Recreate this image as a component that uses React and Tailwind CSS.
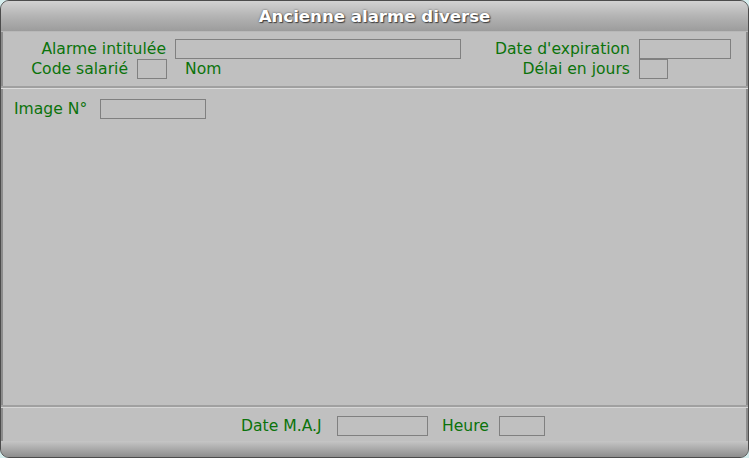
import React from 'react';

const font = { fontFamily: '"DejaVu Sans", Verdana, sans-serif' };

const Field = ({ w, h = 'h-[20px]' }) => (
  <div className={`${w} ${h} border border-[#808080] bg-[#c0c0c0] shrink-0`} />
);

const Label = ({ children, className = '' }) => (
  <span className={`text-[15.6px] leading-[20px] text-[#0b730b] whitespace-nowrap ${className}`}>{children}</span>
);

export default function App() {
  return (
    <div className="w-[749px] h-[458px] bg-[#d6eeee] leading-[20px]" style={font}>
      <div className="w-full h-full flex flex-col rounded-[9px] overflow-hidden border border-[#4c4c4c] bg-[#c0c0c0] shadow-[inset_2px_0_0_#8c8c8c,inset_-2px_0_0_#8c8c8c]">
        {/* Title bar */}
        <div className="h-[31px] shrink-0 flex items-center justify-center pt-[2px] bg-gradient-to-b from-[#d2d2d2] via-[#b4b4b4] to-[#9c9c9c] border-b border-[#b8b8b8]">
          <span className="text-[16.6px] font-bold text-white [text-shadow:1px_1px_1px_#404040,0_0_2px_#505050]">
            Ancienne alarme diverse
          </span>
        </div>

        {/* Header fields */}
        <div className="h-[56px] shrink-0 flex flex-col pt-[7px] pr-[17px] border-b-2 border-[#a0a0a0] shadow-[0_1px_0_#dcdcdc]">
          <div className="flex items-center h-[20px]">
            <div className="w-[165px] text-right"><Label>Alarme intitulée</Label></div>
            <div className="w-[9px]" />
            <Field w="w-[286px]" />
            <div className="flex-1 text-right pr-[9px]"><Label>Date d'expiration</Label></div>
            <Field w="w-[92px]" />
          </div>
          <div className="flex items-center h-[20px]">
            <div className="w-[127px] text-right"><Label>Code salarié</Label></div>
            <div className="w-[9px]" />
            <Field w="w-[30px]" />
            <Label className="ml-[18px]">Nom</Label>
            <div className="flex-1 text-right pr-[9px]"><Label>Délai en jours</Label></div>
            <Field w="w-[29px]" />
            <div className="w-[63px]" />
          </div>
        </div>

        {/* Body */}
        <div className="flex-1 pt-[11px] pl-[13px] border-b-2 border-[#a0a0a0] shadow-[0_1px_0_#d6d6d6]">
          <div className="flex items-center">
            <div className="w-[77px]"><Label>Image N°</Label></div>
            <div className="w-[9px]" />
            <Field w="w-[106px]" />
          </div>
        </div>

        {/* Footer fields */}
        <div className="h-[34px] shrink-0 flex items-center pl-[240px] pt-[3px]">
          <div className="w-[86px]"><Label>Date M.A.J</Label></div>
          <div className="w-[10px]" />
          <Field w="w-[91px]" />
          <div className="w-[14px]" />
          <div className="w-[48px]"><Label>Heure</Label></div>
          <div className="w-[9px]" />
          <Field w="w-[46px]" />
        </div>

        {/* Bottom bar */}
        <div className="h-[16px] shrink-0 bg-gradient-to-b from-[#c6c6c6] to-[#8e8e8e]" />
      </div>
    </div>
  );
}
